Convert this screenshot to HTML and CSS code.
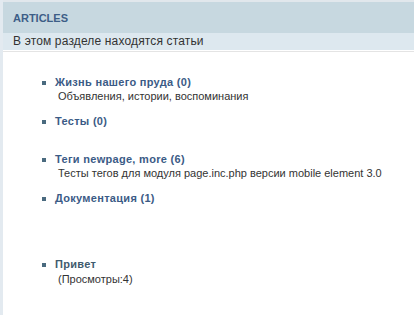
FILE: index.html
```html
<!DOCTYPE html>
<html>
<head>
<meta charset="utf-8">
<link rel="stylesheet" href="styles.css">
</head>
<body>
<div class="page">
  <div class="top-strip"></div>
  <div class="header"><span class="title">ARTICLES</span></div>
  <div class="subtitle">В этом разделе находятся статьи</div>
  <div class="divider"></div>
  <ul class="list">
    <li class="item">
      <a class="name" href="#">Жизнь нашего пруда (0)</a>
      <div class="desc">Объявления, истории, воспоминания</div>
    </li>
    <li class="item item-gap">
      <a class="name" href="#">Тесты (0)</a>
    </li>
    <li class="item">
      <a class="name" href="#">Теги newpage, more (6)</a>
      <div class="desc">Тесты тегов для модуля page.inc.php версии mobile element 3.0</div>
    </li>
    <li class="item item-biggap">
      <a class="name" href="#">Документация (1)</a>
    </li>
    <li class="item">
      <a class="name name-alt" href="#">Привет</a>
      <div class="desc desc-views">(Просмотры:4)</div>
    </li>
  </ul>
</div>
</body>
</html>
```
FILE: styles.css
```css
html, body {
  margin: 0;
  padding: 0;
  background: #ffffff;
}
body {
  font-family: "Liberation Sans", Arial, sans-serif;
}
.page {
  height: 315px;
  border-left: 3px solid #e3eaf0;
  box-sizing: border-box;
}
.top-strip {
  height: 2px;
  background: #e1e7ec;
}
.header {
  height: 31px;
  background: #c7d8e0;
  display: flex;
  align-items: center;
  padding-left: 10px;
}
.title {
  font-weight: bold;
  font-size: 11px;
  color: #3d5e87;
}
.subtitle {
  height: 17px;
  background: #dde8ef;
  font-size: 12px;
  line-height: 17px;
  color: #333333;
  padding-left: 10px;
  letter-spacing: 0.15px;
}
.divider {
  height: 1px;
  margin-top: 1px;
  background: #e4e4e4;
}
.list {
  list-style: none;
  margin: 0;
  padding: 23px 0 0 39px;
}
.item {
  position: relative;
  padding-left: 13px;
  margin-bottom: 11px;
}
.item::before {
  content: "";
  position: absolute;
  left: 0;
  top: 6px;
  width: 4px;
  height: 4px;
  background: #4a6a7f;
}
.item-gap {
  margin-bottom: 24px;
}
.item-biggap {
  margin-bottom: 52px;
}
.name {
  display: block;
  font-weight: bold;
  font-size: 11px;
  line-height: 14px;
  color: #3b5b86;
  text-decoration: none;
  letter-spacing: 0.3px;
}
.name-alt {
  color: #3f5b6e;
}
.desc {
  font-size: 11px;
  line-height: 14px;
  color: #333333;
  padding-left: 3px;
}
.desc-views {
  margin-top: 1px;
}
```
